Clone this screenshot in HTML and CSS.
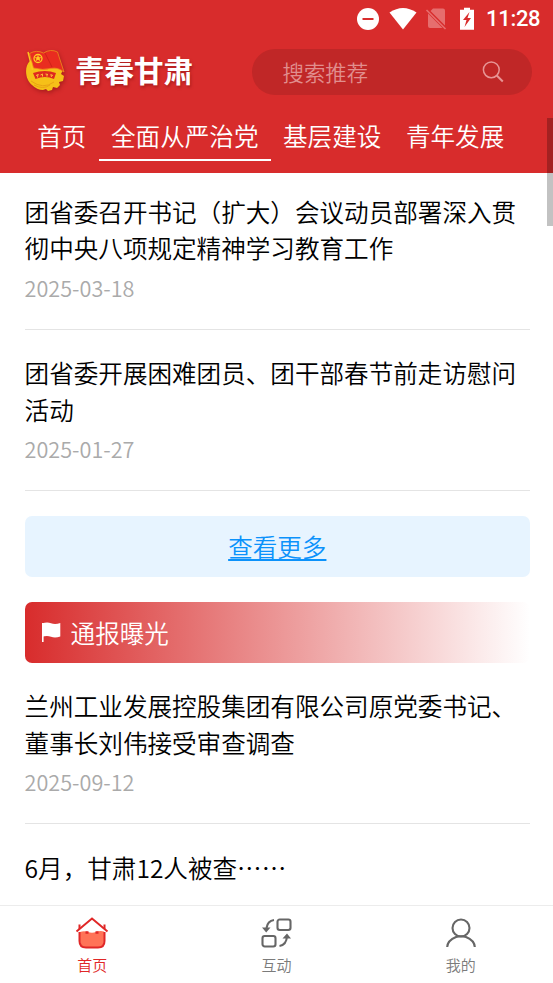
FILE: index.html
```html
<!DOCTYPE html>
<html lang="zh-CN">
<head>
<meta charset="utf-8">
<title>青春甘肃</title>
<link rel="stylesheet" href="styles.css">
</head>
<body>
<div class="app">
<header class="header">
  <div class="status">
    <svg width="24" height="24" viewBox="0 0 24 24"><circle cx="12" cy="12" r="11" fill="#fff"/><path d="M6.500 12h11" stroke="#d82c2c" stroke-width="2"/></svg>
    <svg class="wifi" width="28" height="24" viewBox="0 0 28 24"><path d="M.5 5.500Q14-3.500 27.500 5.500L14 22.500Z" fill="#fff"/></svg>
    <svg class="sim" width="22" height="24" viewBox="0 0 22 24"><path d="M8 1.500h10q2 0 2 2v15L5.500 4zM3 6.500L17.500 21H5q-2 0-2-2z" fill="#e66e6e"/><path d="M1.500 3L20.500 22" stroke="#e66e6e" stroke-width="1.600"/></svg>
    <svg class="battery" width="16" height="24" viewBox="0 0 16 24"><path d="M5 .7h6v2h4v20H1v-20h4z" fill="#fff"/><path d="M10.500 5L4 13h3.500l-2 7L12 11H8.500z" fill="#d82c2c"/></svg>
    <span class="time">11:28</span>
  </div>
  <div class="brand-row">
    <svg class="emblem" width="42" height="44" viewBox="0 0 42 44">
      <path d="M6 12C0 17 1 31 8 36q5 5 11 5l3-1 2 2 4-1 1-3 4 1 3-3-1-3 4-1 1-5-3-2 2-4-5-12z" fill="#f6c018"/>
      <path d="M7 32q12 9 23 1M10 36q9 5 16 0" fill="none" stroke="#e9a313"/>
      <path d="M5.500 4.500q7-4 14-.5 7-4.500 14-1l6.500 20q-6-5-13-3.500-8 2-17.500-.5z" fill="#e92c20" stroke="#ef8f1b" stroke-width=".8"/>
      <path d="M21 4l7 14" stroke="#cf2119" stroke-width="1"/>
      <path d="M4 3l4.500 18" stroke="#ffc51d" stroke-width="1.400"/>
      <circle cx="14" cy="9.500" r="4" fill="none" stroke="#ffcc22" stroke-width="1.300"/>
      <path d="M14 6l1 2.300h2.500l-2 1.500 1 2.500-2.500-1.500-2.500 1.500 1-2.500-2-1.500H13z" fill="#ffcc22"/>
      <path d="M9 24q12-4 23 0l-2 6q-9-4-18.500 0z" fill="#df281f"/>
      <path d="M12 26.500l2.500-1m2 .5l2.500-1m2.500 0l2.500.5m2.500 0l2.500 1M14 25.500l-.5 3m5-3v2m4.500-2v2m4-1.500l.5 2" stroke="#ffc13a" fill="none"/>
    </svg>
    <h1 class="brand">青春甘肃</h1>
    <div class="search"><span>搜索推荐</span>
      <svg width="24" height="24" viewBox="0 0 24 24" fill="none" stroke="#e79595" stroke-width="1.500"><circle cx="10.300" cy="9.800" r="7.900"/><path d="M15.800 15.500l6 6" stroke-width="2"/></svg>
    </div>
  </div>
  <nav class="tabs"><span>首页</span><span class="selected">全面从严治党</span><span>基层建设</span><span>青年发展</span></nav>
</header>
<main class="content">
  <article class="item"><h2>团省委召开书记（扩大）会议动员部署深入贯<br>彻中央八项规定精神学习教育工作</h2><time>2025-03-18</time></article>
  <article class="item"><h2>团省委开展困难团员、团干部春节前走访慰问<br>活动</h2><time>2025-01-27</time></article>
  <a class="more">查看更多</a>
  <div class="section">
    <svg width="19" height="20" viewBox="0 0 19 20" fill="#fff"><path d="M0 1h1.600v19H0z"/><path d="M0 1.500Q5-.5 9 1.200T18.300 1v13.500Q13 16.300 9 14.700T0 14.800z"/></svg>
    <span>通报曝光</span>
  </div>
  <article class="item"><h2>兰州工业发展控股集团有限公司原党委书记、<br>董事长刘伟接受审查调查</h2><time>2025-09-12</time></article>
  <article class="item"><h2>6月，甘肃12人被查……</h2></article>
</main>
<footer class="bottom">
  <div class="entry active">
    <svg width="34" height="34" viewBox="0 0 34 34" fill="none" stroke="#e02727"><path d="M5 16q4-1.500 8 0t8 0 8-.5v9.500q0 7-7 7H12q-7 0-7-7z" fill="#ff7357" stroke="none"/><path d="M4.500 16v9q0 6.500 6.500 6.500h12q6.500 0 6.500-6.500V16M4.500 8.500V13M29.500 8.500V13" stroke-width="2"/><path d="M1.500 15.500L17 2.500l15.500 13" stroke-width="2"/><path d="M10.500 16.500h3m7 0h3" stroke-width="2.500"/></svg>
    <span>首页</span>
  </div>
  <div class="entry">
    <svg width="34" height="34" viewBox="0 0 34 34" fill="none" stroke="#666" stroke-width="2.100"><rect x="18.500" y="3.500" width="13" height="10.500" rx="2.200"/><rect x="3.500" y="20" width="13" height="10.500" rx="2.200"/><path d="M15 4Q8.500 5 7.500 12M20.500 30q7-1 7.500-10"/><path d="M3 11.500h8.500l-4.300 5zM23.500 22.500h8.500l-4-5z" fill="#666" stroke="none"/></svg>
    <span>互动</span>
  </div>
  <div class="entry">
    <svg width="34" height="34" viewBox="0 0 34 34" fill="none" stroke="#666" stroke-width="2.100"><circle cx="17" cy="12" r="8.500"/><path d="M3.200 31Q3.500 24.500 12 21q5-1.500 10 0 8.500 3.500 8.800 10"/></svg>
    <span>我的</span>
  </div>
</footer>
<div class="scrollbar"></div>
</div>
</body>
</html>
```
FILE: styles.css
```css
* { box-sizing: border-box; }
body { margin: 0; background: #fff; color: #000; font-family: "Noto Sans CJK SC", sans-serif; font-weight: 350; }
svg { display: block; flex: none; }
.app { position: relative; width: 553px; height: 983px; overflow: hidden; display: flex; flex-direction: column; }
.header { flex: 0 0 173px; background: #d82c2c; color: #fff; display: flex; flex-direction: column; }
.status { height: 38px; padding: 0 12px 0 0; display: flex; justify-content: flex-end; align-items: center; }
.wifi { margin-left: 9px; }
.sim { margin-left: 8px; }
.battery { margin-left: 12px; }
.time { width: 55px; margin-left: 11px; font: 500 22px/26px Roboto, sans-serif; letter-spacing: -.3px; white-space: nowrap; }
.brand-row { height: 68px; padding: 0 21.500px 0 24px; display: flex; align-items: center; }
.emblem { margin-top: -2px; filter: drop-shadow(1px 2px 2px rgba(80,0,0,.35)); }
.brand { margin: -7px 0 0 9px; font-size: 29.500px; line-height: 40px; font-weight: 700; text-shadow: 1px 2px 3px rgba(90,0,0,.35); white-space: nowrap; }
.search { width: 280px; height: 46px; margin-left: auto; padding: 0 27px 0 31px; border-radius: 23px; background: #c02727; color: #e18e8e; font-size: 21.400px; display: flex; align-items: center; justify-content: space-between; }
.search span { margin-top: -2px; }
.tabs { display: flex; padding-left: 25px; }
.tabs span { height: 55px; padding: 0 12.290px; font-size: 24.580px; line-height: 58px; white-space: nowrap; }
.tabs .selected { border-bottom: 2px solid #fff; }
.content { flex: 1; min-height: 0; overflow: hidden; padding: 0 23px 0 24.580px; }
.item { padding: 24.900px 0 25px; border-bottom: 1px solid #e4e4e4; }
.item:first-child { padding-top: 20px; }
.item h2 { margin: 0; font-size: 24.580px; line-height: 36.300px; font-weight: 350; white-space: nowrap; }
.item time { display: block; margin-top: 6px; color: #aaa; font-size: 21.650px; line-height: 32px; }
.more { display: block; height: 61px; margin: 25px 0 24.500px; border-radius: 7px; background: #e7f4ff; color: #0b92fb; font-size: 24.580px; line-height: 61px; text-align: center; text-decoration: underline; }
.section { height: 61px; padding-left: 17px; border-radius: 7px; background: linear-gradient(90deg, #d82c2c, #fff); color: #fff; display: flex; align-items: center; gap: 10px; font-size: 24.580px; line-height: 61px; }
.bottom { flex: 0 0 78px; border-top: 1px solid #ececec; background: #fff; display: flex; }
.entry { flex: 1; padding-top: 10px; display: flex; flex-direction: column; align-items: center; color: #7b7b7b; font-size: 15px; line-height: 22px; }
.entry span { margin-top: 4px; }
.active { color: #e02727; }
.scrollbar { position: absolute; right: 0; top: 118px; width: 6px; height: 108px; background: rgba(0,0,0,.24); }
```
